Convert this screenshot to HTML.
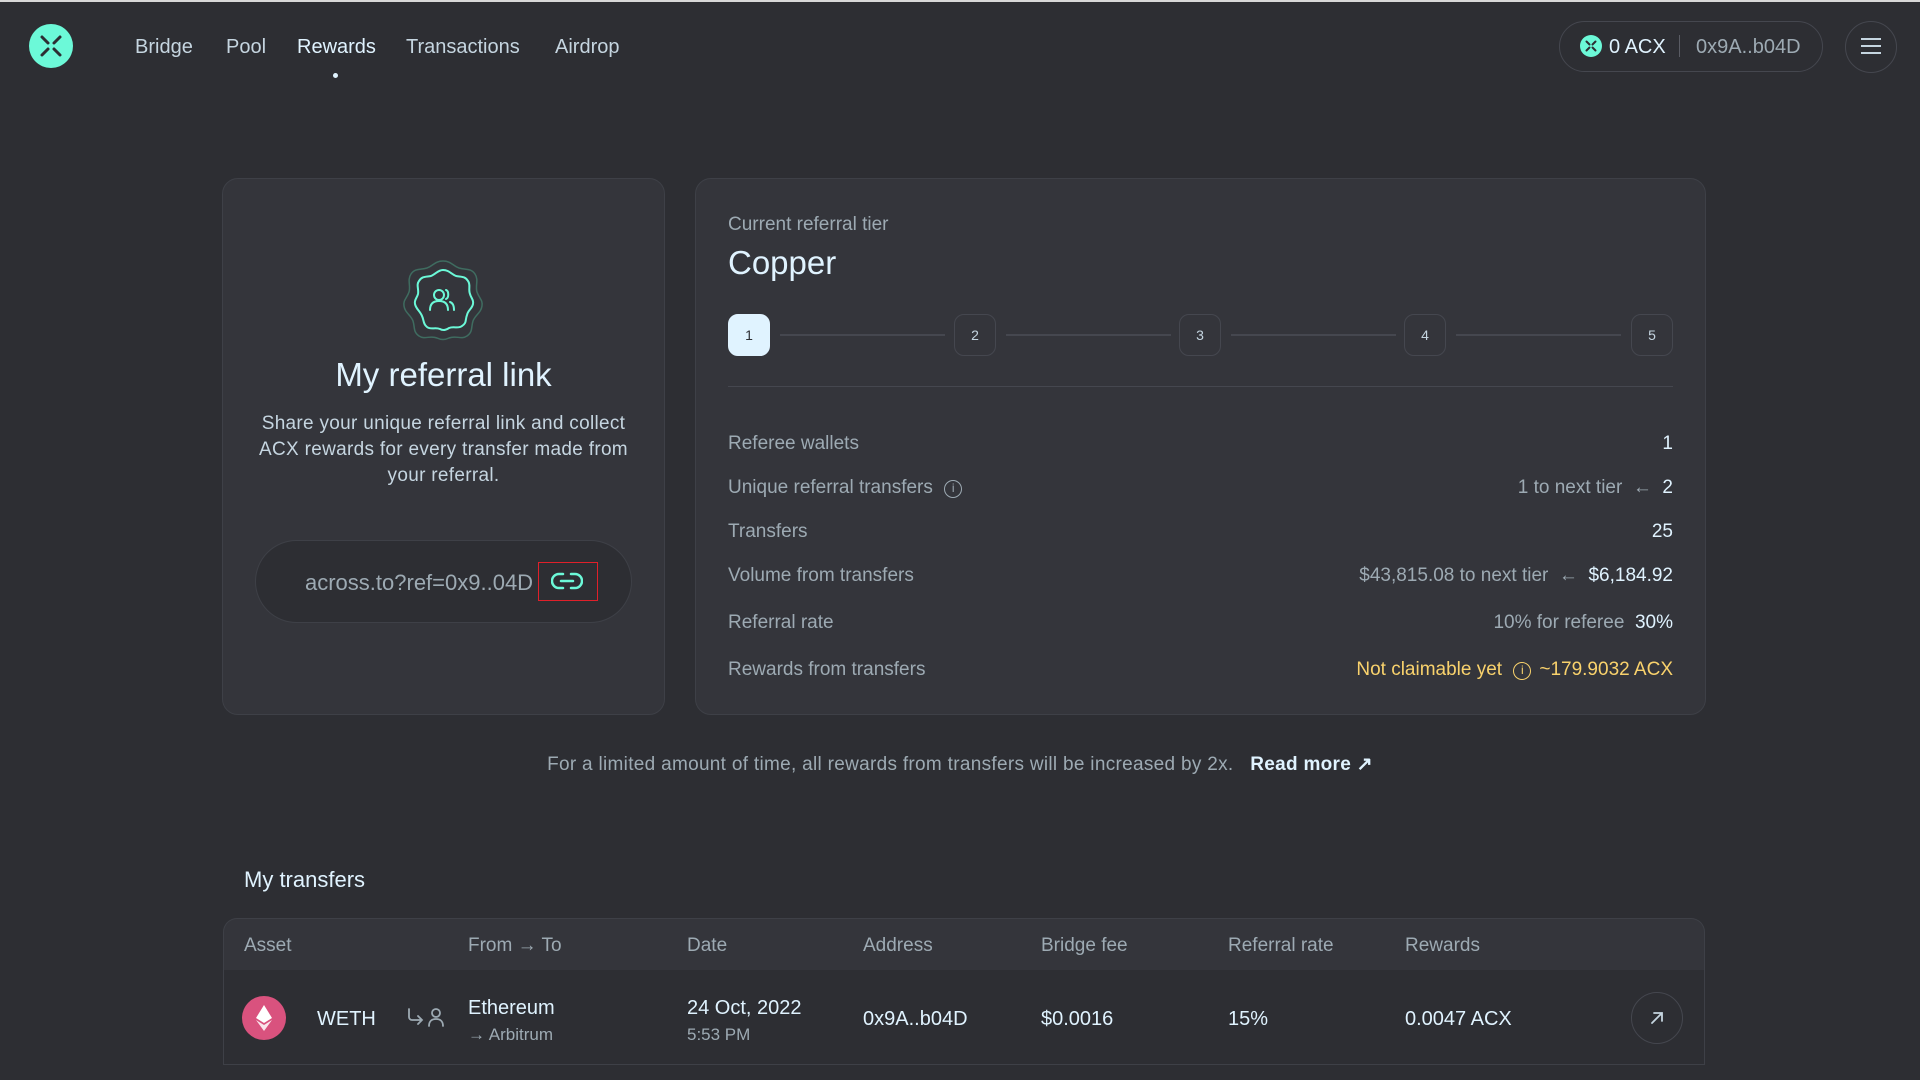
<!DOCTYPE html>
<html><head><meta charset="utf-8"><style>
*{margin:0;padding:0;box-sizing:border-box}
body{width:1920px;height:1080px;background:#2d2e33;font-family:"Liberation Sans",sans-serif;color:#e0f3ff;position:relative;overflow:hidden}
.a{position:absolute;white-space:nowrap}
.g{color:#9daab3}
.w{color:#e0f3ff}
.card{position:absolute;background:#34353b;border:1px solid #3e4047;border-radius:16px}
.t{line-height:30px;height:30px}
.nav{font-size:20px;color:#c5d5e0;top:32px}
.lbl{font-size:19px;color:#9daab3;left:728px}
.val{font-size:19px;right:247px;text-align:right;color:#e0f3ff}
.step{position:absolute;top:314px;width:42px;height:42px;border:1px solid #45474f;border-radius:10px;font-size:14px;color:#c5d5e0;text-align:center;line-height:40px}
.line{position:absolute;top:334px;height:2px;background:#45474f}
.th{font-size:19px;color:#9daab3;top:931px}
</style></head><body>
<div style="position:absolute;left:0;top:0;width:1920px;height:2px;background:#d8d8d8"></div>
<svg class="a" style="left:29px;top:24px" width="44" height="44" viewBox="0 0 44 44"><circle cx="22" cy="22" r="22" fill="#6cf9d8"/><g stroke="#2d2e33" stroke-width="3" stroke-linecap="round"><path d="M13 13l6 6M31 13l-6 6M13 31l6-6M31 31l-6-6"/></g></svg>
<div class="a nav t" style="left:135px">Bridge</div>
<div class="a nav t" style="left:226px">Pool</div>
<div class="a nav t" style="left:297px;color:#e0f3ff">Rewards</div>
<div class="a" style="left:333px;top:73px;width:5px;height:5px;border-radius:50%;background:#e0f3ff"></div>
<div class="a nav t" style="left:406px">Transactions</div>
<div class="a nav t" style="left:555px">Airdrop</div>
<div class="a" style="left:1559px;top:21px;width:264px;height:51px;border:1px solid #45474f;border-radius:26px"></div>
<svg class="a" style="left:1580px;top:35px" width="22" height="22" viewBox="0 0 44 44"><circle cx="22" cy="22" r="22" fill="#6cf9d8"/><g stroke="#2d2e33" stroke-width="4" stroke-linecap="round"><path d="M13 13l6 6M31 13l-6 6M13 31l6-6M31 31l-6-6"/></g></svg>
<div class="a t" style="left:1609px;top:32px;font-size:20px;color:#e0f3ff">0 ACX</div>
<div class="a" style="left:1679px;top:35px;width:1px;height:22px;background:#5a5c64"></div>
<div class="a t" style="left:1696px;top:32px;font-size:20px;color:#9daab3">0x9A..b04D</div>
<div class="a" style="left:1845px;top:21px;width:52px;height:52px;border:1px solid #45474f;border-radius:50%"></div>
<div class="a" style="left:1861px;top:38px;width:20px;height:2px;background:#c5d5e0;box-shadow:0 7px 0 #c5d5e0,0 14px 0 #c5d5e0"></div>

<div class="card" style="left:222px;top:178px;width:443px;height:537px"></div>
<svg class="a" style="left:401px;top:258px" width="84" height="84" viewBox="0 0 84 84">
<path d="M42 3 C50 3 52 8 58 10 C65 12 70 10 74 16 C78 22 74 28 76 34 C78 40 82 42 81 48 C80 55 74 57 72 63 C70 69 72 74 66 78 C60 82 55 77 48 80 C44 82 40 82 36 80 C29 77 24 82 18 78 C12 74 14 69 12 63 C10 57 4 55 3 48 C2 42 6 40 8 34 C10 28 6 22 10 16 C14 10 19 12 26 10 C32 8 34 3 42 3Z" fill="none" stroke="#3f6c60" stroke-width="1.5"/>
<path d="M42 12 C48 12 50 16 55 18 C60 19 64 18 67 23 C70 27 67 31 69 36 C70 40 73 42 72 46 C71 51 67 52 66 57 C64 62 66 65 61 68 C57 71 53 68 48 70 C45 72 42 73 39 71 C34 69 30 72 26 69 C22 66 23 62 21 58 C19 53 15 51 14 46 C13 42 16 40 17 36 C18 31 15 27 18 23 C21 18 25 19 30 18 C35 16 37 12 42 12Z" fill="none" stroke="#6cf9d8" stroke-width="2"/>
<g fill="none" stroke="#6cf9d8" stroke-width="2" stroke-linecap="round"><circle cx="38" cy="37" r="5"/><path d="M29 52 C29 45 33 43 38 43 C43 43 47 45 47 52"/><path d="M45 32 C48 33 48 40 45 41"/><path d="M49 44 C52 45 53 48 53 52"/></g></svg>
<div class="a" style="left:222px;width:443px;text-align:center;top:354px;font-size:33px;line-height:42px;color:#e0f3ff">My referral link</div>
<div class="a" style="left:222px;width:443px;text-align:center;top:411px;font-size:19px;line-height:26px;letter-spacing:0.3px;color:#c5d5e0;white-space:normal">Share your unique referral link and collect<br>ACX rewards for every transfer made from<br>your referral.</div>
<div class="a" style="left:255px;top:540px;width:377px;height:83px;border:1px solid #3e4047;border-radius:42px;background:#2d2e33"></div>
<div class="a" style="left:305px;top:567px;font-size:22px;line-height:32px;color:#9daab3">across.to?ref=0x9..04D</div>
<div class="a" style="left:538px;top:562px;width:60px;height:39px;border:1px solid #e0202a"></div>
<svg class="a" style="left:551px;top:571px" width="32" height="20" viewBox="0 0 32 20"><g fill="none" stroke="#6cf9d8" stroke-width="2.5" stroke-linecap="round"><path d="M12 3H8a7 7 0 0 0 0 14h4M20 3h4a7 7 0 0 1 0 14h-4M10 10h12"/></g></svg>

<div class="card" style="left:695px;top:178px;width:1011px;height:537px"></div>
<div class="a t" style="left:728px;top:210px;font-size:19px;color:#9daab3">Current referral tier</div>
<div class="a" style="left:728px;top:242px;font-size:33px;line-height:42px;color:#e0f3ff">Copper</div>
<div class="step" style="left:728px;background:#e0f3ff;border-color:#e0f3ff;color:#2d2e33">1</div>
<div class="line" style="left:780px;width:165px"></div>
<div class="step" style="left:954px">2</div>
<div class="line" style="left:1006px;width:165px"></div>
<div class="step" style="left:1179px">3</div>
<div class="line" style="left:1231px;width:165px"></div>
<div class="step" style="left:1404px">4</div>
<div class="line" style="left:1456px;width:165px"></div>
<div class="step" style="left:1631px">5</div>
<div class="a" style="left:728px;top:386px;width:945px;height:1px;background:#45474f"></div>

<div class="a t lbl" style="top:429px">Referee wallets</div>
<div class="a t val" style="top:429px">1</div>
<div class="a t lbl" style="top:473px">Unique referral transfers <span style="display:inline-block;width:18px;height:18px;border:1.5px solid #9daab3;border-radius:50%;font-size:12px;line-height:15px;text-align:center;vertical-align:1px;margin-left:6px">i</span></div>
<div class="a t val" style="top:473px"><span class="g">1 to next tier&nbsp; ←&nbsp; </span>2</div>
<div class="a t lbl" style="top:517px">Transfers</div>
<div class="a t val" style="top:517px">25</div>
<div class="a t lbl" style="top:561px">Volume from transfers</div>
<div class="a t val" style="top:561px"><span class="g">$43,815.08 to next tier&nbsp; ←&nbsp; </span>$6,184.92</div>
<div class="a t lbl" style="top:608px">Referral rate</div>
<div class="a t val" style="top:608px"><span class="g">10% for referee&nbsp; </span>30%</div>
<div class="a t lbl" style="top:655px">Rewards from transfers</div>
<div class="a t val" style="top:655px;color:#f9d26c">Not claimable yet <span style="display:inline-block;width:18px;height:18px;border:1.5px solid #f9d26c;border-radius:50%;font-size:12px;line-height:15px;text-align:center;vertical-align:1px;margin:0 8px 0 6px">i</span>~179.9032 ACX</div>

<div class="a t" style="left:0;width:1920px;text-align:center;top:750px;font-size:19px;letter-spacing:0.3px;color:#9daab3">For a limited amount of time, all rewards from transfers will be increased by 2x.&nbsp;&nbsp; <span style="color:#e0f3ff;font-weight:bold">Read more ↗</span></div>

<div class="a" style="left:244px;top:865px;font-size:22px;line-height:30px;color:#e0f3ff">My transfers</div>
<div class="a" style="left:223px;top:918px;width:1482px;height:52px;background:#34353b;border-radius:14px 14px 0 0;border:1px solid #3e4047;border-bottom:none"></div>
<div class="a t th" style="left:244px">Asset</div>
<div class="a t th" style="left:468px">From → To</div>
<div class="a t th" style="left:687px">Date</div>
<div class="a t th" style="left:863px">Address</div>
<div class="a t th" style="left:1041px">Bridge fee</div>
<div class="a t th" style="left:1228px">Referral rate</div>
<div class="a t th" style="left:1405px">Rewards</div>
<div class="a" style="left:223px;top:1064px;width:1482px;height:1px;background:#3e4047"></div>
<div class="a" style="left:1704px;top:970px;width:1px;height:95px;background:#3e4047"></div>
<div class="a" style="left:223px;top:970px;width:1px;height:95px;background:#3e4047"></div>
<svg class="a" style="left:242px;top:996px" width="44" height="44" viewBox="0 0 44 44"><circle cx="22" cy="22" r="22" fill="#d9527e"/><path d="M22 9l-8 13 8 5 8-5z" fill="#fff"/><path d="M14 24l8 11 8-11-8 5z" fill="#fff" opacity=".85"/></svg>
<div class="a t" style="left:317px;top:1004px;font-size:20px;color:#e0f3ff">WETH</div>
<svg class="a" style="left:405px;top:1006px" width="42" height="22" viewBox="0 0 42 22"><g fill="none" stroke="#9daab3" stroke-width="1.8" stroke-linecap="round"><path d="M4 3v8a3 3 0 0 0 3 3h10M13 10l4 4-4 4"/><circle cx="31" cy="7" r="4"/><path d="M24 20c0-5 3-7 7-7s7 2 7 7"/></g></svg>
<div class="a t" style="left:468px;top:993px;font-size:20px;color:#e0f3ff">Ethereum</div>
<div class="a t" style="left:468px;top:1020px;font-size:17px;color:#9daab3">→ Arbitrum</div>
<div class="a t" style="left:687px;top:993px;font-size:20px;color:#e0f3ff">24 Oct, 2022</div>
<div class="a t" style="left:687px;top:1020px;font-size:17px;color:#9daab3">5:53 PM</div>
<div class="a t" style="left:863px;top:1004px;font-size:20px;color:#e0f3ff">0x9A..b04D</div>
<div class="a t" style="left:1041px;top:1004px;font-size:20px;color:#e0f3ff">$0.0016</div>
<div class="a t" style="left:1228px;top:1004px;font-size:20px;color:#e0f3ff">15%</div>
<div class="a t" style="left:1405px;top:1004px;font-size:20px;color:#e0f3ff">0.0047 ACX</div>
<div class="a" style="left:1631px;top:992px;width:52px;height:52px;border:1px solid #45474f;border-radius:50%"></div>
<svg class="a" style="left:1647px;top:1008px" width="20" height="20" viewBox="0 0 20 20"><g fill="none" stroke="#c5d5e0" stroke-width="1.8" stroke-linecap="round"><path d="M5 15L15 5M7 5h8v8"/></g></svg>
</body></html>
